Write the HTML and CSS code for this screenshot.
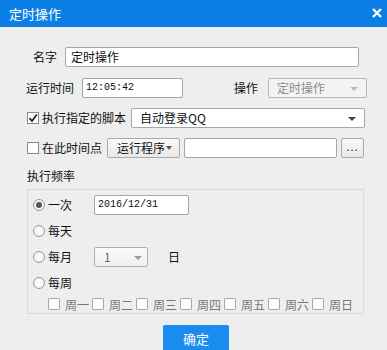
FILE: index.html
```html
<!DOCTYPE html>
<html lang="zh">
<head>
    <meta charset="UTF-8">
    <title>定时操作</title>
    <link rel="stylesheet" href="styles.css">
</head>
<body>
<div class="dialog">
    <div class="titlebar">
        <span class="title">定时操作</span>
        <svg class="close" width="10" height="10" viewBox="0 0 10 10">
            <path d="M1 1L9 9M9 1L1 9" stroke="#fff" stroke-width="2.2" fill="none"/>
        </svg>
    </div>
    <div class="form">
        <div class="row row-name">
            <span class="lbl">名字</span>
            <div class="input input-name">定时操作</div>
        </div>
        <div class="row">
            <span class="lbl">运行时间</span>
            <div class="input input-time mono">12:05:42</div>
            <span class="lbl lbl-op">操作</span>
            <div class="select select-op disabled">定时操作<i class="arrow"></i></div>
        </div>
        <div class="row">
            <span class="check checked">
                <svg width="10" height="10" viewBox="0 0 10 10"><path d="M1.5 5.2L4 8L8.8 1.5" stroke="#222" stroke-width="1.8" fill="none"/></svg>
            </span>
            <span class="lbl lbl-check">执行指定的脚本</span>
            <div class="select select-script">自动登录QQ<i class="arrow"></i></div>
        </div>
        <div class="row">
            <span class="check"></span>
            <span class="lbl lbl-check">在此时间点</span>
            <div class="btn btn-run">运行程序<i class="arrow arrow-sm"></i></div>
            <div class="input input-path"></div>
            <div class="btn btn-more">...</div>
        </div>
        <div class="section-title">执行频率</div>
        <div class="group">
            <div class="grow">
                <span class="radio on"></span>
                <span class="rlbl">一次</span>
                <div class="input input-date mono">2016/12/31</div>
            </div>
            <div class="grow">
                <span class="radio"></span>
                <span class="rlbl">每天</span>
            </div>
            <div class="grow">
                <span class="radio"></span>
                <span class="rlbl">每月</span>
                <div class="select select-day">1<i class="arrow arrow-gray"></i></div>
                <span class="day">日</span>
            </div>
            <div class="grow">
                <span class="radio"></span>
                <span class="rlbl">每周</span>
            </div>
            <div class="weekdays">
                <span class="wd"><span class="check light"></span>周一</span>
                <span class="wd"><span class="check light"></span>周二</span>
                <span class="wd"><span class="check light"></span>周三</span>
                <span class="wd"><span class="check light"></span>周四</span>
                <span class="wd"><span class="check light"></span>周五</span>
                <span class="wd"><span class="check light"></span>周六</span>
                <span class="wd"><span class="check light"></span>周日</span>
            </div>
        </div>
        <div class="footer">
            <div class="ok">确定</div>
        </div>
    </div>
</div>
</body>
</html>
```

FILE: styles.css
```css
*{ margin:0; padding:0; box-sizing:border-box;}
body{
    background:#eeeeee;
    font-family:"Noto Sans CJK SC","Liberation Sans",sans-serif;
    font-size:12px;
    color:#111;
    overflow:hidden;
}
.dialog{
    width:387px;
    height:350px;
}
.titlebar{
    height:27px;
    background:#0c7fe6;
    color:#fff;
    display:flex;
    align-items:center;
    justify-content:space-between;
    padding:0 5px 0 9px;
}
.title{
    font-size:13px;
    line-height:27px;
}
.close{ margin-bottom:1px;}
.form{
    padding:20px 0 0 26px;
}
.row{
    display:flex;
    align-items:center;
    height:20px;
    margin-bottom:10px;
}
.row-name{
    padding-left:7px;
    margin-bottom:11px;
}
.lbl{
    line-height:20px;
    white-space:nowrap;
}
.row-name .lbl{ margin-right:7px;}
.row .lbl{ margin-right:8px;}
.row .lbl-op{ margin-left:51px; margin-right:10px;}
.row .lbl-check{ margin-left:3px; margin-right:5px;}
.input{
    height:20px;
    background:#fff;
    border:1px solid #a6a6a6;
    border-radius:2px;
    line-height:18px;
    padding-left:4px;
    white-space:nowrap;
}
.mono{
    font-family:"Liberation Mono","DejaVu Sans Mono",monospace;
    font-size:10px;
    padding-left:3px;
}
.input-name{ width:294px; padding-left:5px;}
.input-time{ width:101px;}
.input-path{ width:153px; margin-left:4px;}
.input-date{ width:95px;}
.select{
    position:relative;
    height:20px;
    border:1px solid #a6a6a6;
    border-radius:2px;
    background:linear-gradient(#fbfbfb,#f0f0f0);
    line-height:18px;
    padding-left:8px;
    white-space:nowrap;
}
.select.disabled{
    color:#8c8c8c;
    border-color:#b8b8b8;
    background:#f3f3f3;
}
.select-op{ width:99px;}
.select-script{ width:234px; background:#fff;}
.select-day{ width:54px; padding-left:9px; color:#666; border-color:#b0b0b0;}
.arrow{
    position:absolute;
    right:8px;
    top:8px;
    width:0;
    height:0;
    border-left:4px solid transparent;
    border-right:4px solid transparent;
    border-top:4px solid #444;
}
.select.disabled .arrow{ border-top-color:#bbb;}
.arrow-gray{ border-top-color:#999; right:5px;}
.btn{
    position:relative;
    height:20px;
    border:1px solid #aaaaaa;
    border-radius:2px;
    background:linear-gradient(#fafafa,#e8e8e8);
    line-height:18px;
    white-space:nowrap;
}
.btn-run{ width:73px; padding-left:9px;}
.arrow-sm{
    right:7px;
    top:7px;
    border-left-width:3px;
    border-right-width:3px;
    border-top:4px solid #555;
}
.btn-more{
    width:23px;
    margin-left:4px;
    text-align:center;
    line-height:14px;
    font-size:11px;
    letter-spacing:1px;
    color:#333;
}
.check{
    display:inline-flex;
    align-items:center;
    justify-content:center;
    width:12px;
    height:12px;
    margin-left:1px;
    background:#fff;
    border:1px solid #888;
}
.check.light{
    border-color:#a9a9a9;
    border-radius:1px;
    margin:0 5px 0 0;
}
.section-title{
    height:16px;
    line-height:16px;
    margin:5px 0 5px 1px;
}
.group{
    width:337px;
    height:125px;
    margin-left:1px;
    border:1px solid #dadada;
    padding:5px 0 0 5px;
}
.grow{
    display:flex;
    align-items:center;
    height:20px;
    margin-bottom:6px;
}
.radio{
    width:12px;
    height:12px;
    border-radius:50%;
    border:1px solid #9a9a9a;
    background:radial-gradient(#ffffff,#f0f0f0);
    display:flex;
    align-items:center;
    justify-content:center;
}
.radio.on::after{
    content:"";
    width:6px;
    height:6px;
    border-radius:50%;
    background:#555;
}
.rlbl{
    width:46px;
    margin-left:3px;
    line-height:20px;
}
.day{ margin-left:20px; line-height:20px;}
.weekdays{
    display:flex;
    align-items:center;
    height:14px;
    margin-top:-2px;
    padding-left:15px;
}
.wd{
    display:flex;
    align-items:center;
    width:44px;
    color:#777;
    white-space:nowrap;
}
.footer{
    padding:11px 0 0 137px;
}
.ok{
    width:66px;
    height:30px;
    background:#1a8cf0;
    border-radius:2px;
    color:#fff;
    font-size:13px;
    text-align:center;
    line-height:28px;
}
```
